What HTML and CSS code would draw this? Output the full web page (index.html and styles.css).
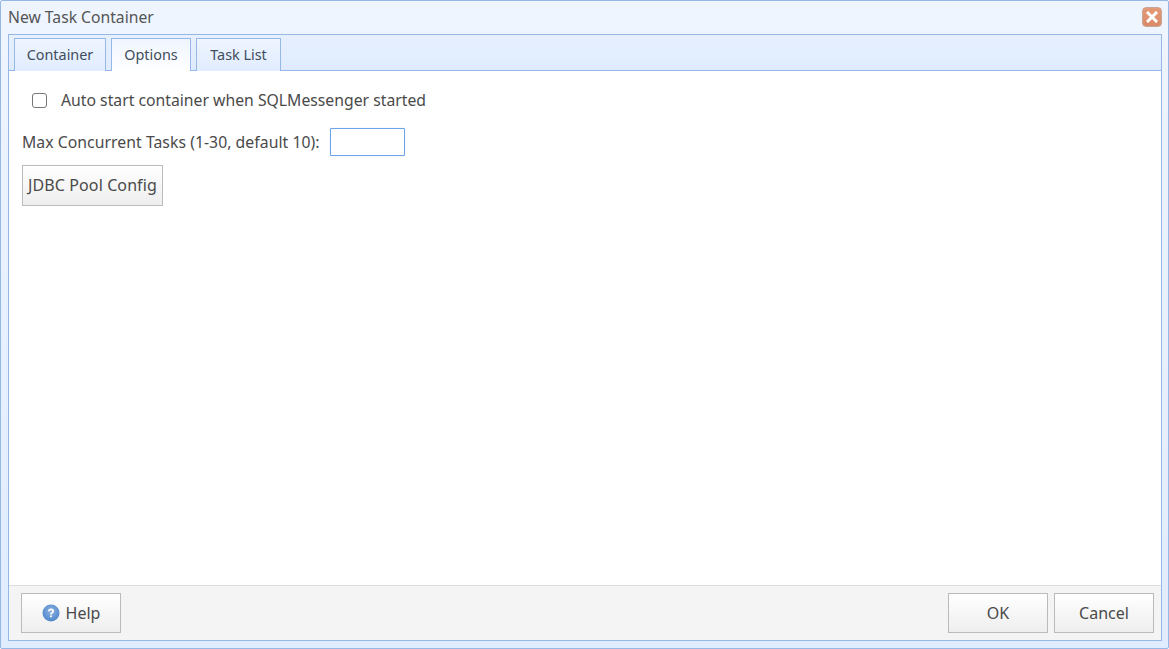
FILE: index.html
```html
<!DOCTYPE html>
<html lang="en">
<head>
<meta charset="utf-8">
<title>New Task Container</title>
<link rel="stylesheet" href="styles.css">
</head>
<body>
<div class="window">
  <div class="titlebar">
    <span class="title">New Task Container</span>
    <button class="close" aria-label="Close">
      <svg width="12" height="12" viewBox="0 0 12 12"><path d="M2 2 10 10M10 2 2 10" stroke="#fff" stroke-width="3" stroke-linecap="square" fill="none"/></svg>
    </button>
  </div>
  <div class="panel">
    <div class="tabs">
      <div class="tab tab-container">Container</div>
      <div class="tab tab-options active">Options</div>
      <div class="tab tab-list">Task List</div>
    </div>
    <div class="content">
      <label class="check-row"><span class="checkbox"></span>Auto start container when SQLMessenger started</label>
      <div class="field-row"><span class="field-label">Max Concurrent Tasks (1-30, default 10):</span><span class="input"></span></div>
      <button class="btn pool">JDBC Pool Config</button>
    </div>
    <div class="footer">
      <button class="btn help">
        <svg width="18" height="18" viewBox="0 0 18 18">
          <defs><radialGradient id="h" cx="50%" cy="40%" r="60%"><stop offset="0" stop-color="#8fb4e4"/><stop offset="1" stop-color="#4f86c9"/></radialGradient></defs>
          <circle cx="9" cy="9" r="8.5" fill="url(#h)"/>
          <path d="M6.8 7.2C6.9 5.9 7.8 5.3 9 5.3c1.3 0 2.2.7 2.2 1.8 0 1.7-2.2 1.6-2.2 3.3" fill="none" stroke="#fff" stroke-width="1.7"/>
          <rect x="8.1" y="11.4" width="1.8" height="1.8" fill="#fff"/>
        </svg>
        <span>Help</span>
      </button>
      <div class="actions">
        <button class="btn act">OK</button>
        <button class="btn act">Cancel</button>
      </div>
    </div>
  </div>
</div>
</body>
</html>
```
FILE: styles.css
```css
* { box-sizing: border-box; }
html, body { margin: 0; padding: 0; }
body { width: 1169px; height: 649px; overflow: hidden; font-family: "Noto Sans", "Open Sans", sans-serif; font-size: 15.75px; color: #4a4a4a; }
.window { width: 1169px; height: 649px; display: flex; flex-direction: column; padding: 0 6px 7px 7px; border: 1px solid #95b8e7; border-radius: 2px; background: linear-gradient(to bottom, #eff5ff 0, #e0ecff 100%); }
.titlebar { height: 33px; flex: none; display: flex; align-items: center; justify-content: space-between; padding-bottom: 1px; }
.title { color: #555; font-size: 15.7px; }
.close { width: 20px; height: 20px; margin: 0; padding: 0; border: 1px solid #c9a595; border-radius: 4px; background: linear-gradient(to bottom, #e39a78, #d98a66); display: flex; align-items: center; justify-content: center; }
.panel { flex: 1; display: flex; flex-direction: column; min-height: 0; border: 1px solid #95b8e7; background: #fff; }
.tabs { height: 36px; flex: none; display: flex; gap: 5px; padding: 3px 0 0 5px; border-bottom: 1px solid #95b8e7; background: linear-gradient(to bottom, #e7f0ff, #dfebfd); }
.tab { height: 33px; padding-bottom: 2px; border: 1px solid #95b8e7; border-bottom: 0; display: flex; align-items: center; justify-content: center; color: #404d5c; font-size: 14.4px; background: linear-gradient(to bottom, #eff5ff, #e0ecff); }
.tab-container { width: 92px; }
.tab-options { width: 80px; }
.tab-list { width: 85px; }
.tab.active { height: 34px; padding-bottom: 3px; background: linear-gradient(to bottom, #eff5ff, #fff); }
.content { flex: 1; padding: 0 13px; background: #fff; }
.check-row { display: flex; align-items: center; height: 20px; margin: 19px 0 0 10px; }
.checkbox { width: 15px; height: 15px; margin-right: 14px; border: 1px solid #767676; border-radius: 3px; background: #fff; }
.field-row { display: flex; align-items: center; height: 28px; margin-top: 18px; }
.field-label { letter-spacing: .05px; }
.input { width: 75px; height: 28px; margin-left: 10px; border: 1px solid #6da3ea; border-radius: 1px; background: #fff; box-shadow: 0 0 1px #a9c9f3; }
.btn { font: inherit; font-size: 16px; color: #4a4a4a; border: 1px solid #bbb; background: linear-gradient(to bottom, #fff, #eee); padding: 0; }
.pool { display: block; width: 141px; height: 41px; margin-top: 9px; padding-bottom: 1px; letter-spacing: .1px; }
.footer { height: 55px; flex: none; display: flex; justify-content: space-between; padding: 7px 7px 0 12px; background: #f4f4f4; border-top: 1px solid #ddd; }
.help { width: 100px; height: 40px; display: flex; align-items: center; justify-content: center; gap: 6px; }
.actions { display: flex; gap: 6px; }
.act { width: 100px; height: 40px; }
```
